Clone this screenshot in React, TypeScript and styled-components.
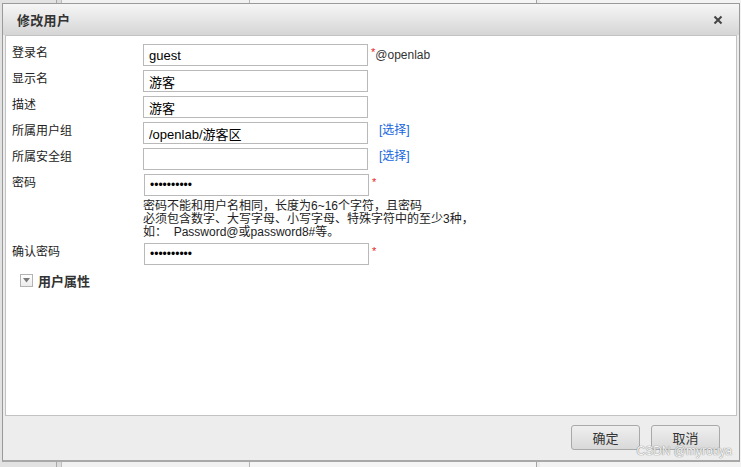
import styled, { createGlobalStyle } from 'styled-components';

const GlobalStyle = createGlobalStyle`
  html, body {
    margin: 0;
    padding: 0;
  }
  body {
    width: 741px;
    height: 467px;
    overflow: hidden;
    font-family: "Liberation Sans", "Noto Sans CJK SC", sans-serif;
    font-size: 12px;
    color: #222;
    background: linear-gradient(90deg,
      #e2e2e2 0 56px, #a9a9a9 56px 57px, #dcdcdc 57px 61px, #bdbdbd 61px 62px,
      #f1f1f1 62px 249px, #b5b5b5 249px 250px, #f5f5f5 250px 536px,
      #a4a4a4 536px 537px, #ececec 537px 540px, #f3f3f3 540px);
  }
`;

interface FieldRowProps {
  label: string
  value?: string
  password?: boolean
  required?: boolean
  suffix?: string
  pick?: boolean
  hint?: string[]
}

const FieldRow = ({ label, value, password, required, suffix, pick, hint }: FieldRowProps) => (
  <Row>
    <Label>{ label }</Label>
    <FieldCell>
      <TextInput
        type={ password ? 'password' : 'text' }
        defaultValue={ value }
        readOnly
        $password={ password }
      />
      { hint && (
        <Hint>
          { hint.map((line) => <div key={line}>{ line }</div>) }
        </Hint>
      ) }
    </FieldCell>
    <Extra>
      { required && <Star $shift={ password }>*</Star> }
      { suffix && <Suffix>{ suffix }</Suffix> }
      { pick && <PickLink href="#">[选择]</PickLink> }
    </Extra>
  </Row>
);

const App = () => {
  return (
    <>
      <GlobalStyle />
      <Dialog>
        <TitleBar>
          <Title>修改用户</Title>
          <CloseButton aria-label="close">
            <svg width="10" height="10" viewBox="0 0 10 10">
              <path d="M1.5 1.5 L8.5 8.5 M8.5 1.5 L1.5 8.5" stroke="#444" strokeWidth="2" />
            </svg>
          </CloseButton>
        </TitleBar>
        <Body>
          <Form>
            <FieldRow label="登录名" value="guest" required suffix="@openlab" />
            <FieldRow label="显示名" value="游客" />
            <FieldRow label="描述" value="游客" />
            <FieldRow label="所属用户组" value="/openlab/游客区" pick />
            <FieldRow label="所属安全组" value="" pick />
            <FieldRow
              label="密码"
              value="abcdefghij"
              password
              required
              hint={[
                '密码不能和用户名相同，长度为6~16个字符，且密码',
                '必须包含数字、大写字母、小写字母、特殊字符中的至少3种，',
                '如：  Password@或password8#等。',
              ]}
            />
            <FieldRow label="确认密码" value="abcdefghij" password required />
          </Form>
          <Section>
            <ToggleBox>
              <svg width="7" height="5" viewBox="0 0 7 5">
                <path d="M0 0 H7 L3.5 4.5 Z" fill="#7a7a7a" />
              </svg>
            </ToggleBox>
            <SectionTitle>用户属性</SectionTitle>
          </Section>
        </Body>
        <Footer>
          <Button>确定</Button>
          <Button>取消</Button>
          <Watermark>CSDN @myrouya</Watermark>
        </Footer>
      </Dialog>
    </>
  );
};

const Dialog = styled.div`
  position: relative;
  box-sizing: border-box;
  margin: 3px 0 0 2px;
  width: 738px;
  height: 459px;
  border: 1px solid #9a9a9a;
  border-bottom: 2px solid #a8a8a8;
  background: #ededed;
  display: flex;
  flex-direction: column;
`;

const TitleBar = styled.div`
  height: 31px;
  display: flex;
  align-items: center;
  justify-content: space-between;
  padding: 0 15px 0 14px;
  background: linear-gradient(#f6f6f6, #d5d5d5);
`;

const Title = styled.div`
  font-size: 13px;
  font-weight: bold;
  color: #333;
  letter-spacing: 0.3px;
`;

const CloseButton = styled.div`
  display: flex;
  align-items: center;
  justify-content: center;
  width: 12px;
  height: 12px;
  cursor: pointer;
`;

const Body = styled.div`
  flex: 1;
  margin: 0 2px;
  background: #fff;
  border: 1px solid #c2c2c2;
  padding: 8px 0 0 6px;
`;

const Form = styled.div`
  display: flex;
  flex-direction: column;
  gap: 4px;
`;

const Row = styled.div`
  display: grid;
  grid-template-columns: 131px 226px auto;
  align-items: start;
`;

const Label = styled.div`
  padding-top: 2px;
  line-height: 14px;
  font-size: 12px;
  color: #222;
`;

const FieldCell = styled.div`
  display: flex;
  flex-direction: column;
`;

const TextInput = styled.input<{ $password?: boolean }>`
  box-sizing: border-box;
  width: 225px;
  height: 22px;
  margin: 0 0 0 ${ props => props.$password ? '1px' : '0' };
  padding: 0 5px;
  border: 1px solid #b9b9b9;
  outline: none;
  font-family: "Liberation Sans", "Noto Sans CJK SC", sans-serif;
  font-size: ${ props => props.$password ? '12px' : '13px' };
  color: #000;
  background: #fff;
`;

const Hint = styled.div`
  margin-top: 4px;
  font-size: 12px;
  line-height: 13px;
  color: #222;
  white-space: pre;
`;

const Extra = styled.div`
  display: flex;
  align-items: flex-start;
  padding-left: 2px;
  line-height: 22px;
`;

const Star = styled.span<{ $shift?: boolean }>`
  color: #e8231c;
  font-size: 11px;
  line-height: 16px;
  margin-left: ${ props => props.$shift ? '1px' : '0' };
`;

const Suffix = styled.span`
  color: #333;
  font-size: 12px;
  line-height: 22px;
`;

const PickLink = styled.a`
  margin-left: 8px;
  color: #1565e0;
  font-size: 12px;
  line-height: 16px;
  text-decoration: none;
`;

const Section = styled.div`
  display: flex;
  align-items: center;
  gap: 5px;
  margin: 6px 0 0 8px;
`;

const ToggleBox = styled.div`
  box-sizing: border-box;
  width: 13px;
  height: 13px;
  border: 1px solid #b3b3b3;
  background: linear-gradient(#ffffff, #ececec);
  display: flex;
  align-items: center;
  justify-content: center;
`;

const SectionTitle = styled.div`
  font-size: 13px;
  font-weight: bold;
  color: #333;
`;

const Footer = styled.div`
  position: relative;
  box-sizing: border-box;
  flex-shrink: 0;
  height: 44px;
  display: flex;
  justify-content: flex-end;
  align-items: flex-start;
  gap: 11px;
  padding: 9px 19px 0 0;
  background: #ededed;
`;

const Button = styled.button`
  box-sizing: border-box;
  width: 69px;
  height: 25px;
  border: 1px solid #a9a9a9;
  border-radius: 3px;
  background: linear-gradient(#efefef, #d9d9d9);
  font-family: "Liberation Sans", "Noto Sans CJK SC", sans-serif;
  font-size: 13px;
  color: #333;
  padding: 0;
  cursor: pointer;
`;

const Watermark = styled.div`
  position: absolute;
  right: 7px;
  bottom: 2px;
  font-size: 12px;
  color: #f4f4f4;
  text-shadow: 0 0 1px #8a8a8a, 0 0 1px #8a8a8a;
  pointer-events: none;
`;

export default App;
